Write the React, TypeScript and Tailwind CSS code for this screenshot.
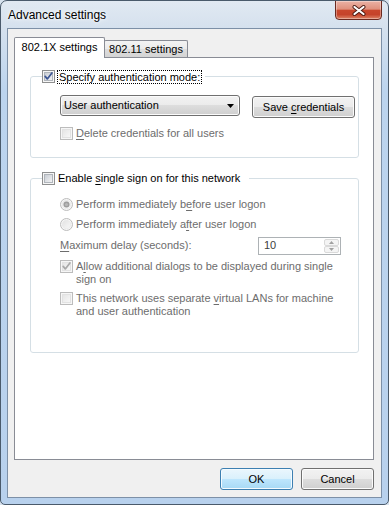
import React from "react";

function CheckBox({ checked = false, disabled = false }: { checked?: boolean; disabled?: boolean }) {
  const border = disabled ? "#bcbcbc" : "#8e8f8f";
  return (
    <svg width="13" height="13" viewBox="0 0 13 13" className="block shrink-0">
      <defs>
        <linearGradient id="cbge" x1="0" y1="0" x2="1" y2="1">
          <stop offset="0" stopColor="#c6cbd2" />
          <stop offset="1" stopColor="#f5f5f6" />
        </linearGradient>
        <linearGradient id="cbgd" x1="0" y1="0" x2="1" y2="1">
          <stop offset="0" stopColor="#e4e4e4" />
          <stop offset="1" stopColor="#f8f8f8" />
        </linearGradient>
      </defs>
      <rect x="0.5" y="0.5" width="12" height="12" fill="#f6f6f6" stroke={border} />
      <rect
        x="2.5"
        y="2.5"
        width="8"
        height="8"
        fill={disabled ? "url(#cbgd)" : "url(#cbge)"}
        stroke={disabled ? "#e2e2e2" : "#b0b5bb"}
      />
      {checked && (
        <path
          d="M3.2 6.4 L5.3 8.9 L9.9 2.9"
          fill="none"
          stroke={disabled ? "#a9a9a9" : "#3d5694"}
          strokeWidth="1.7"
          strokeLinecap="round"
          strokeLinejoin="round"
        />
      )}
    </svg>
  );
}

function Radio({ selected = false }: { selected?: boolean }) {
  return (
    <svg width="13" height="13" viewBox="0 0 13 13" className="block shrink-0">
      <defs>
        <linearGradient id="rgd" x1="0" y1="0" x2="1" y2="1">
          <stop offset="0" stopColor="#e2e2e2" />
          <stop offset="1" stopColor="#f8f8f8" />
        </linearGradient>
      </defs>
      <circle cx="6.5" cy="6.5" r="6" fill="#f6f6f6" stroke="#bcbcbc" />
      <circle cx="6.5" cy="6.5" r="4.2" fill="url(#rgd)" stroke="#e6e6e6" strokeWidth="0.6" />
      {selected && (
        <>
          <circle cx="6.5" cy="6.5" r="3" fill="#9d9d9d" />
          <circle cx="6.5" cy="6.5" r="1.6" fill="#b8b8b8" />
        </>
      )}
    </svg>
  );
}

function Btn({ children, isDefault = false, w }: { children: React.ReactNode; isDefault?: boolean; w: string }) {
  const cls = isDefault
    ? "border-[#3c7fb1] bg-[linear-gradient(180deg,#eaf6fd_0%,#d9f0fc_50%,#bee6fd_50%,#a7d9f5_100%)] shadow-[inset_0_0_0_1px_#f4fbff]"
    : "border-[#707070] bg-[linear-gradient(180deg,#f2f2f2_0%,#ebebeb_50%,#dddddd_50%,#cfcfcf_100%)] shadow-[inset_0_0_0_1px_#fbfbfb]";
  return (
    <div className={`${w} h-[22px] rounded-[3px] border ${cls} flex items-center justify-center text-black`}>
      {children}
    </div>
  );
}

export default function App() {
  const dis = "text-[#6d6d6d]";
  return (
    <div className="w-[389px] h-[505px] bg-[#d7e2ee] font-['Liberation_Sans',Arial,sans-serif] text-[11px] leading-[13px] text-black">
      <div className="w-full h-full flex flex-col rounded-t-[7px] rounded-b-[5px] border border-[#4a5a6b] overflow-hidden bg-[linear-gradient(180deg,#e1e9f2_0px,#d5e1ee_27px,#bcd4ee_90px,#b8d1ed_100%)]">
        {/* Title bar */}
        <div className="h-[27px] shrink-0 flex items-start">
          <div className="flex-1 pl-[7px] pt-[7px] text-[12px] leading-[14px] [text-shadow:0_0_6px_#ffffff,0_0_3px_#ffffff]">
            Advanced settings
          </div>
          <div className="mr-[6px] -mt-px w-[47px] h-[20px] rounded-b-[4px] border border-[#6b2a20] bg-[linear-gradient(180deg,#eab2a5_0%,#df907d_45%,#c9472c_52%,#c5432a_75%,#dd8466_100%)] shadow-[inset_0_0_0_1px_rgba(255,255,255,0.35)] flex items-center justify-center">
            <svg width="14" height="11" viewBox="0 0 14 11">
              <path d="M2.5 2 L11.5 9 M11.5 2 L2.5 9" stroke="#4a1a12" strokeWidth="4" strokeLinecap="round" />
              <path d="M2.5 2 L11.5 9 M11.5 2 L2.5 9" stroke="#ffffff" strokeWidth="2.2" strokeLinecap="round" />
            </svg>
          </div>
        </div>

        {/* Client area */}
        <div className="mx-[6px] mb-[6px] flex-1 border border-[#7d90a7] bg-[#f0f0f0] flex flex-col pt-[8px] pl-[6px] pr-[7px] pb-[7px]">
          {/* Tabs */}
          <div className="h-[20px] shrink-0 flex items-end">
            <div className="relative z-10 -mb-px h-[21px] w-[91px] rounded-t-[2px] border border-b-0 border-[#898c95] bg-white flex items-center justify-center pb-[1px]">
              802.1X settings
            </div>
            <div className="-ml-px h-[17px] w-[84px] rounded-t-[2px] border border-b-0 border-[#898c95] bg-[linear-gradient(180deg,#f3f3f3_0%,#ebebeb_50%,#dedede_50%,#d4d4d4_100%)] flex items-center justify-center">
              802.11 settings
            </div>
          </div>

          {/* Tab panel */}
          <div className="flex-1 border border-[#898c95] bg-white">
            {/* Group 1 */}
            <fieldset className="mt-[11px] ml-[15px] mr-[14px] border border-[#d5dfe5] rounded-[3px]">
              <legend className="ml-[11px] pr-[3px]">
                <div className="h-[15px] flex items-center">
                  <CheckBox checked />
                  <span className="ml-[2px] border border-dotted border-black px-[1px] leading-[12px]">
                    Specify authentication mode:
                  </span>
                </div>
              </legend>
              <div className="pl-[29px] pt-[11px] pb-[16px]">
                <div className="flex items-start">
                  <div className="w-[180px] h-[21px] rounded-[3px] border border-[#707070] bg-[linear-gradient(180deg,#f2f2f2_0%,#ebebeb_50%,#dddddd_50%,#cfcfcf_100%)] shadow-[inset_0_0_0_1px_#fbfbfb] flex items-center pl-[3px] pr-[5px]">
                    <span className="flex-1">User authentication</span>
                    <svg width="7" height="4" viewBox="0 0 7 4">
                      <polygon points="0,0 7,0 3.5,4" fill="#000" />
                    </svg>
                  </div>
                  <div className="ml-[12px] mt-[1px]">
                    <Btn w="w-[103px]">
                      <span>
                        Save <u className="underline-offset-[2px]">c</u>redentials
                      </span>
                    </Btn>
                  </div>
                </div>
                <div className={`mt-[8px] h-[15px] flex items-center gap-[3px] ${dis}`}>
                  <CheckBox disabled />
                  <span>
                    <u className="underline-offset-[2px]">D</u>elete credentials for all users
                  </span>
                </div>
              </div>
            </fieldset>

            {/* Group 2 */}
            <fieldset className="mt-[13px] ml-[15px] mr-[14px] border border-[#d5dfe5] rounded-[3px]">
              <legend className="ml-[11px] pr-[9px]">
                <div className="h-[15px] flex items-center gap-[3px]">
                  <CheckBox />
                  <span>
                    Enable <u className="underline-offset-[2px]">s</u>ingle sign on for this network
                  </span>
                </div>
              </legend>
              <div className={`pl-[29px] pt-[11px] pb-[34px] ${dis}`}>
                <div className="h-[15px] flex items-center gap-[3px]">
                  <Radio selected />
                  <span>
                    Perform immediately b<u className="underline-offset-[2px]">e</u>fore user logon
                  </span>
                </div>
                <div className="mt-[5px] h-[15px] flex items-center gap-[3px]">
                  <Radio />
                  <span>
                    Perform immediately a<u className="underline-offset-[2px]">f</u>ter user logon
                  </span>
                </div>
                <div className="mt-[4px] h-[19px] flex items-center">
                  <span className="w-[198px]">
                    <u className="underline-offset-[2px]">M</u>aximum delay (seconds):
                  </span>
                  <div className="w-[83px] h-[18px] border border-[#adb2b5] bg-white flex items-stretch">
                    <span className="flex-1 flex items-center pl-[5px] text-[#404040]">10</span>
                    <div className="w-[17px] flex flex-col p-[1px] gap-0">
                      <div className="flex-1 border border-[#d9d9d9] rounded-[2px] bg-[#f4f4f4] flex items-center justify-center">
                        <svg width="5" height="3" viewBox="0 0 5 3">
                          <polygon points="0,3 5,3 2.5,0" fill="#a0a0a0" />
                        </svg>
                      </div>
                      <div className="flex-1 border border-[#d9d9d9] rounded-[2px] bg-[#f4f4f4] flex items-center justify-center">
                        <svg width="5" height="3" viewBox="0 0 5 3">
                          <polygon points="0,0 5,0 2.5,3" fill="#a0a0a0" />
                        </svg>
                      </div>
                    </div>
                  </div>
                </div>
                <div className="mt-[5px] flex items-start gap-[3px]">
                  <CheckBox checked disabled />
                  <span className="whitespace-nowrap">
                    A<u className="underline-offset-[2px]">l</u>low additional dialogs to be displayed during single
                    <br />
                    sign on
                  </span>
                </div>
                <div className="mt-[6px] flex items-start gap-[3px]">
                  <CheckBox disabled />
                  <span className="whitespace-nowrap">
                    This network uses separate <u className="underline-offset-[2px]">v</u>irtual LANs for machine
                    <br />
                    and user authentication
                  </span>
                </div>
              </div>
            </fieldset>
          </div>

          {/* Buttons */}
          <div className="mt-[8px] shrink-0 flex justify-end gap-[8px]">
            <Btn w="w-[73px]" isDefault>
              OK
            </Btn>
            <Btn w="w-[73px]">Cancel</Btn>
          </div>
        </div>
      </div>
    </div>
  );
}
